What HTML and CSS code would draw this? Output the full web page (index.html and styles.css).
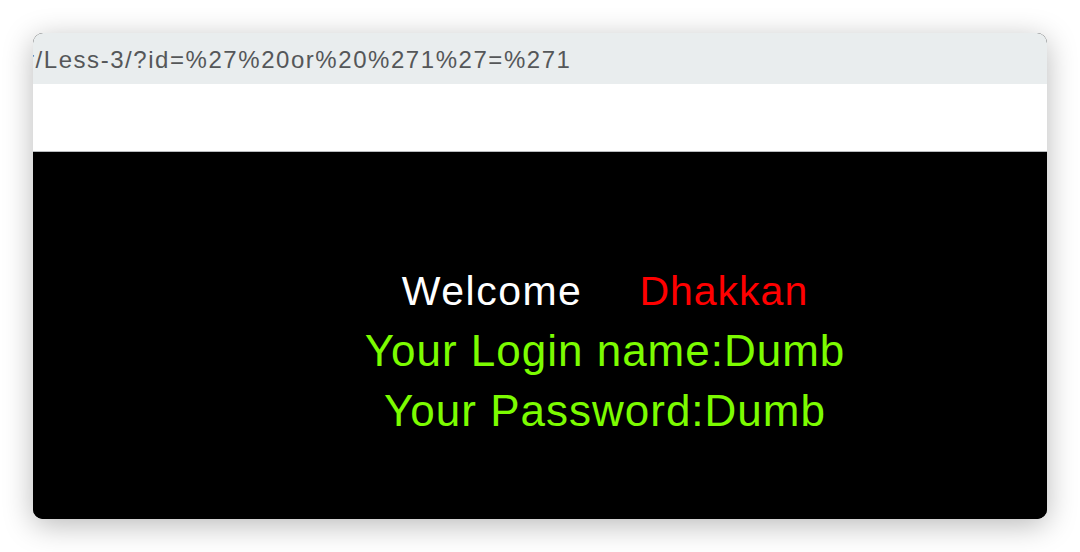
FILE: index.html
```html
<!DOCTYPE html>
<html>
<head>
<meta charset="utf-8">
<link rel="stylesheet" href="styles.css">
</head>
<body>
<div class="window">
  <div class="urlbar"><span class="url">r/Less-3/?id=%27%20or%20%271%27=%271</span></div>
  <div class="blank"></div>
  <div class="page">
    <div class="content">
      <div class="line first"><span class="welcome">Welcome</span><span class="name">Dhakkan</span></div>
      <div class="line green">Your Login name:Dumb</div>
      <div class="line green">Your Password:Dumb</div>
    </div>
  </div>
</div>
</body>
</html>
```
FILE: styles.css
```css
html, body {
  margin: 0;
  padding: 0;
  background: #ffffff;
}
body {
  padding: 33px 33px 0 33px;
  height: 552px;
  box-sizing: border-box;
  overflow: hidden;
}
.window {
  width: 1014px;
  height: 486px;
  border-radius: 10px;
  overflow: hidden;
  display: flex;
  flex-direction: column;
  box-shadow: 0 6px 30px rgba(0, 0, 0, 0.28);
  background: #000;
}
.urlbar {
  height: 51px;
  background: #e9edee;
  overflow: hidden;
  display: flex;
  align-items: center;
  justify-content: flex-start;
}
.url {
  font-family: "Liberation Sans", Arial, sans-serif;
  font-size: 24px;
  letter-spacing: 1.55px;
  color: #555759;
  white-space: nowrap;
  margin-left: -7px;
  padding-top: 2px;
}
.blank {
  height: 67px;
  background: #ffffff;
  border-bottom: 1px solid #b9bcbf;
}
.page {
  flex: 1;
  background: #000;
  padding-left: 130px;
  padding-top: 109px;
}
.content {
  display: flex;
  flex-direction: column;
  align-items: center;
  font-family: "Liberation Sans", Arial, sans-serif;
}
.line {
  height: 60px;
  line-height: 60px;
  white-space: nowrap;
  font-size: 44px;
  letter-spacing: 1px;
}
.line.first {
  font-size: 41px;
}
.welcome {
  color: #ffffff;
  letter-spacing: 1.5px;
  margin-right: 57px;
}
.name {
  color: #ff0000;
}
.green {
  color: #7cfc00;
}
```
